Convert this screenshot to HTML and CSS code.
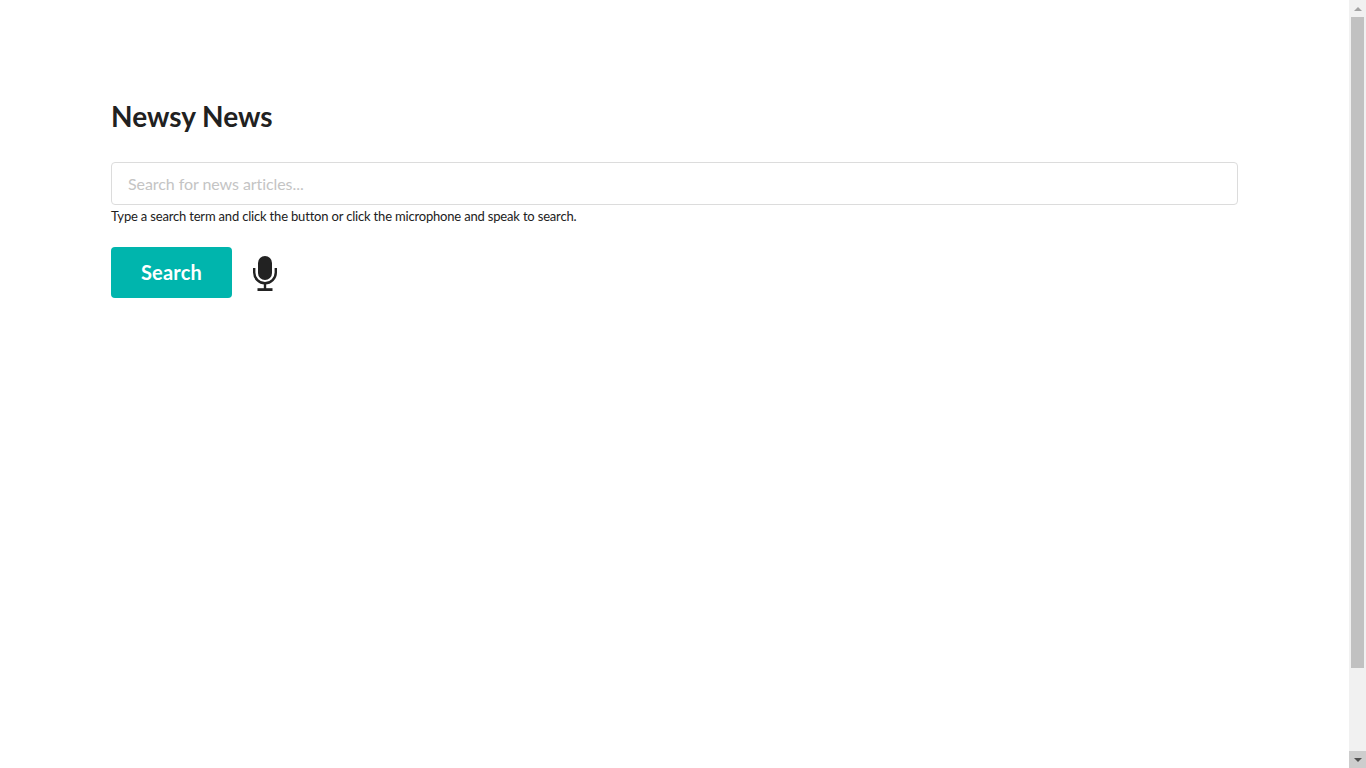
FILE: index.html
```html
<!DOCTYPE html>
<html lang="en">
<head>
<meta charset="utf-8">
<title>Newsy News</title>
<link rel="stylesheet" href="styles.css">
</head>
<body>
<div class="page">
  <main class="content">
    <h1 class="title">Newsy News</h1>
    <input class="search-input" type="text" placeholder="Search for news articles...">
    <p class="help">Type a search term and click the button or click the microphone and speak to search.</p>
    <div class="actions">
      <button class="search-button" type="button">Search</button>
      <svg class="mic" viewBox="0 0 24 36" width="24" height="36" aria-label="microphone">
        <rect x="5" y="1" width="14" height="24" rx="7" fill="#222"/>
        <path d="M1.2 13v4.5a10.8 10.8 0 0 0 21.6 0v-4.5" fill="none" stroke="#222" stroke-width="2.4"/>
        <rect x="10.8" y="28" width="2.4" height="6" fill="#222"/>
        <rect x="4.5" y="33.2" width="15" height="2.8" fill="#222"/>
      </svg>
    </div>
  </main>
  <aside class="scrollbar">
    <div class="sb-btn"><span class="arrow-up"></span></div>
    <div class="sb-track"><div class="sb-thumb"></div></div>
    <div class="sb-btn sb-btn-down"><span class="arrow-down"></span></div>
  </aside>
</div>
</body>
</html>
```
FILE: styles.css
```css
* { box-sizing: border-box; }
html, body { margin: 0; height: 100%; overflow: hidden; background: #fff; }
body { font-family: Lato, "Open Sans", sans-serif; color: #212121; }
.page { display: flex; height: 768px; }
.content { flex: 1; padding: 99px 111px 0 111px; }
.title { margin: 0 0 29px; font-size: 28px; line-height: 34px; font-weight: 700; color: #212121; }
.search-input { display: block; width: 1127px; height: 43px; padding: 0 16px; border: 1px solid #dcdcdc; border-radius: 4px; font-family: inherit; font-size: 16px; letter-spacing: -0.07px; color: #212121; background: #fff; outline: none; }
.search-input::placeholder { color: #c4c4c4; opacity: 1; }
.help { margin: 3px 0 0; font-size: 13px; letter-spacing: -0.18px; line-height: 16px; color: #212121; }
.actions { display: flex; align-items: center; gap: 21px; margin-top: 23px; }
.search-button { width: 121px; height: 51px; border: 0; border-radius: 4px; background: #00b5ad; color: #fff; font-family: inherit; font-size: 20px; font-weight: 700; letter-spacing: 0.2px; padding: 0 0 2px; }
.mic { display: block; }
.scrollbar { width: 17px; display: flex; flex-direction: column; background: #f1f1f1; }
.sb-btn { height: 17px; display: flex; align-items: center; justify-content: center; }
.sb-btn-down { background: #cdcdcd; }
.sb-track { flex: 1; padding: 0 2px; }
.sb-thumb { height: 651px; background: #c1c1c1; }
.arrow-up { width: 0; height: 0; border-left: 4px solid transparent; border-right: 4px solid transparent; border-bottom: 4px solid #a3a3a3; }
.arrow-down { width: 0; height: 0; border-left: 4px solid transparent; border-right: 4px solid transparent; border-top: 4px solid #505050; }
```
